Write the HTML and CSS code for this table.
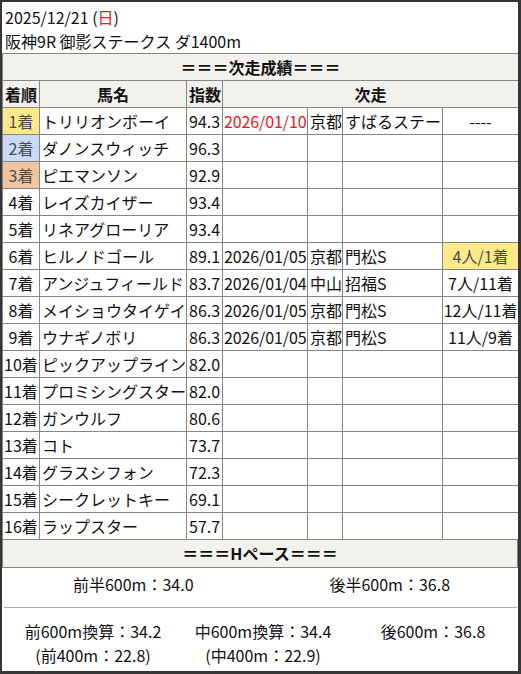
FILE: index.html
```html
<!DOCTYPE html>
<html lang="ja">
<head>
<meta charset="utf-8">
<title>次走成績</title>
<link rel="stylesheet" href="styles.css">
</head>
<body>
<div class="card">
  <div class="head">
    <div>2025/12/21 (<span class="red">日</span>)</div>
    <div>阪神9R 御影ステークス ダ1400m</div>
  </div>
  <table class="res">
    <colgroup>
      <col class="c-rank"><col class="c-name"><col class="c-idx"><col class="c-date"><col class="c-place"><col class="c-race"><col class="c-result">
    </colgroup>
    <thead>
      <tr><th colspan="7" class="bar">＝＝＝次走成績＝＝＝</th></tr>
      <tr class="hdr"><th>着順</th><th>馬名</th><th>指数</th><th colspan="4">次走</th></tr>
    </thead>
    <tbody>
      <tr><td class="rank r1">1着</td><td>トリリオンボーイ</td><td>94.3</td><td class="date red">2026/01/10</td><td>京都</td><td>すばるステー</td><td class="ctr">----</td></tr>
      <tr><td class="rank r2">2着</td><td>ダノンスウィッチ</td><td>96.3</td><td></td><td></td><td></td><td></td></tr>
      <tr><td class="rank r3">3着</td><td>ピエマンソン</td><td>92.9</td><td></td><td></td><td></td><td></td></tr>
      <tr><td class="rank">4着</td><td>レイズカイザー</td><td>93.4</td><td></td><td></td><td></td><td></td></tr>
      <tr><td class="rank">5着</td><td>リネアグローリア</td><td>93.4</td><td></td><td></td><td></td><td></td></tr>
      <tr><td class="rank">6着</td><td>ヒルノドゴール</td><td>89.1</td><td class="date">2026/01/05</td><td>京都</td><td>門松S</td><td class="ctr r1">4人/1着</td></tr>
      <tr><td class="rank">7着</td><td>アンジュフィールド</td><td>83.7</td><td class="date">2026/01/04</td><td>中山</td><td>招福S</td><td class="ctr">7人/11着</td></tr>
      <tr><td class="rank">8着</td><td>メイショウタイゲイ</td><td>86.3</td><td class="date">2026/01/05</td><td>京都</td><td>門松S</td><td class="ctr">12人/11着</td></tr>
      <tr><td class="rank">9着</td><td>ウナギノボリ</td><td>86.3</td><td class="date">2026/01/05</td><td>京都</td><td>門松S</td><td class="ctr">11人/9着</td></tr>
      <tr><td class="rank">10着</td><td>ピックアップライン</td><td>82.0</td><td></td><td></td><td></td><td></td></tr>
      <tr><td class="rank">11着</td><td>プロミシングスター</td><td>82.0</td><td></td><td></td><td></td><td></td></tr>
      <tr><td class="rank">12着</td><td>ガンウルフ</td><td>80.6</td><td></td><td></td><td></td><td></td></tr>
      <tr><td class="rank">13着</td><td>コト</td><td>73.7</td><td></td><td></td><td></td><td></td></tr>
      <tr><td class="rank">14着</td><td>グラスシフォン</td><td>72.3</td><td></td><td></td><td></td><td></td></tr>
      <tr><td class="rank">15着</td><td>シークレットキー</td><td>69.1</td><td></td><td></td><td></td><td></td></tr>
      <tr><td class="rank">16着</td><td>ラップスター</td><td>57.7</td><td></td><td></td><td></td><td></td></tr>
    </tbody>
  </table>
  <div class="bar pace-title">＝＝＝Hペース＝＝＝</div>
  <div class="pace">
    <div class="halves">
      <div>前半600m：34.0</div>
      <div>後半600m：36.8</div>
    </div>
    <hr class="sep">
    <div class="thirds">
      <div><div>前600m換算：34.2</div><div>(前400m：22.8)</div></div>
      <div><div>中600m換算：34.4</div><div>(中400m：22.9)</div></div>
      <div><div>後600m：36.8</div></div>
    </div>
  </div>
</div>
</body>
</html>
```
FILE: styles.css
```css
* { box-sizing: border-box; }
html, body { margin: 0; padding: 0; }
body {
  background: #363636;
  padding: 2px 3px 3px 2px;
  font-family: "Noto Sans CJK JP", "Noto Sans", sans-serif;
  font-size: 16px;
  color: #111;
}
.card {
  width: 516px;
  height: 669px;
  background: #fff;
  overflow: hidden;
}
.head {
  padding: 3px 3px 0;
  line-height: 24px;
  height: 51px;
}
.red { color: #f0141e; }
.res {
  width: 516px;
  border-collapse: collapse;
  table-layout: fixed;
}
.res th, .res td {
  border: 1px solid #868686;
  padding: 0 2px;
  height: 27px;
  line-height: 24px;
  white-space: nowrap;
  overflow: hidden;
  text-align: left;
  font-weight: normal;
}
.c-rank { width: 37px; }
.c-name { width: 147px; }
.c-idx { width: 36px; }
.c-date { width: 85px; }
.c-place { width: 35px; }
.c-race { width: 100px; }
.c-result { width: 76px; }
.res th {
  background: #f2f1ec;
  font-weight: bold;
  text-align: center;
}
.res td.rank { text-align: center; padding: 0; }
.res td.ctr { text-align: center; padding: 0; }
.res td.date { padding: 0 0 0 1px; letter-spacing: -0.1px; }
.r1 { background: #fde98b; color: #4a4a4a; }
.r2 { background: #c9daf8; color: #4a4a4a; }
.r3 { background: #efc6a0; color: #4a4a4a; }
.bar {
  background: #f2f1ec;
  font-weight: bold;
  text-align: center;
}
.pace-title {
  height: 28px;
  line-height: 26px;
  border: 1px solid #868686;
  border-top: none;
}
.pace { padding-top: 4px; }
.halves {
  display: grid;
  grid-template-columns: 1fr 1fr;
  text-align: center;
  line-height: 24px;
  padding-left: 3px;
}
.sep {
  border: none;
  border-top: 1px solid #aaa;
  margin: 11px 1px 0 2px;
  height: 0;
}
.thirds {
  display: grid;
  grid-template-columns: 1fr 1fr 1fr;
  text-align: center;
  line-height: 24px;
  padding: 11px 0 0 6px;
}
```
